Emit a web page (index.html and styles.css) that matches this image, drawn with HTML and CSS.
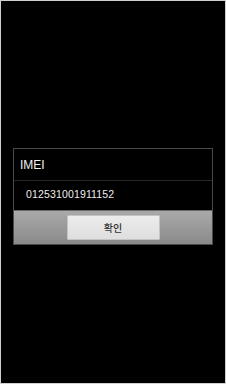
FILE: index.html
```html
<!DOCTYPE html>
<html>
<head>
<meta charset="utf-8">
<link rel="stylesheet" href="styles.css">
</head>
<body>
<div class="screen">
  <div class="dialog">
    <div class="title">IMEI</div>
    <div class="message">012531001911152</div>
    <div class="buttons">
      <div class="btn">확인</div>
    </div>
  </div>
</div>
</body>
</html>
```
FILE: styles.css
```css
html, body {
  margin: 0;
  padding: 0;
  background: #000;
}
.screen {
  box-sizing: border-box;
  width: 226px;
  height: 384px;
  border: 1px solid #cfcfcf;
  background: #000;
  padding: 147px 0 0 12px;
  font-family: "Liberation Sans", Arial, "Noto Sans CJK KR", sans-serif;
}
.dialog {
  box-sizing: border-box;
  width: 200px;
  border: 1px solid #4a4a4a;
  background: #000;
}
.title {
  height: 31px;
  line-height: 33px;
  padding-left: 6px;
  color: #f2f2f2;
  font-size: 12px;
  border-bottom: 1px solid #262626;
}
.message {
  height: 29px;
  line-height: 26px;
  padding-left: 12px;
  color: #eeeeee;
  font-size: 10.5px;
  letter-spacing: 0.15px;
}
.buttons {
  height: 34px;
  display: flex;
  justify-content: center;
  align-items: flex-start;
  padding-top: 4px;
  box-sizing: border-box;
  background: linear-gradient(#a9a9a9, #8a8a8a);
  border-top: 1px solid #6a6a6a;
}
.btn {
  box-sizing: border-box;
  width: 93px;
  height: 25px;
  display: flex;
  align-items: center;
  justify-content: center;
  background: linear-gradient(#ececec, #dedede);
  border: 1px solid #c4c4c4;
  border-radius: 1px;
  color: #333;
  font-size: 10px;
  font-weight: 500;
  font-family: "Noto Sans CJK KR", sans-serif;
}
```
